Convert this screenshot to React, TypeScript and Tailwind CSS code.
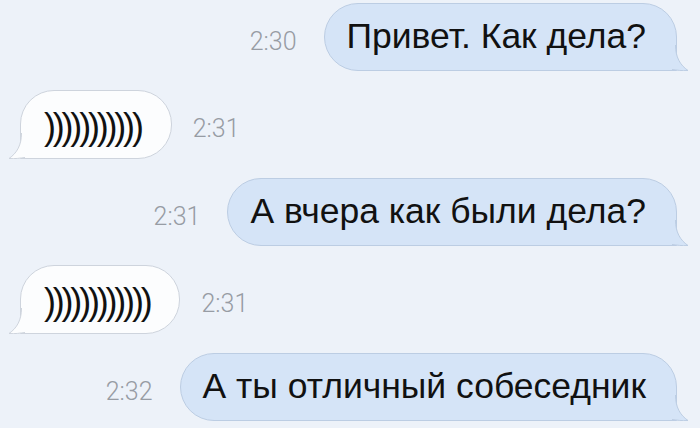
import React from "react";

const Tail = ({ side, fill, stroke }: { side: "left" | "right"; fill: string; stroke: string }) => (
  <svg
    width="18"
    height="26"
    viewBox="0 0 18 26"
    className={
      side === "right"
        ? "absolute right-[-14px] bottom-[-1px]"
        : "absolute left-[-14px] bottom-[-1px] -scale-x-100"
    }
  >
    <path d="M0,0 L3.5,0 C3.5,12 8,20 16,25.5 C10,26 4,25 0,24.5 Z" fill={fill} />
    <path d="M3.5,0 C3.5,12 8,20 16,25.5 C10,26 4,25 0,24.5" fill="none" stroke={stroke} strokeWidth="1" />
  </svg>
);

const Time = ({ t }: { t: string }) => (
  <span
    className="text-[25px] font-light text-[#979ca4] leading-none mt-[8px]"
    style={{ fontFamily: "Roboto, 'Liberation Sans', sans-serif" }}
  >
    {t}
  </span>
);

const Right = ({ text, time }: { text: string; time: string }) => (
  <div className="flex items-center justify-end pr-[23px] gap-[27px]">
    <Time t={time} />
    <div className="relative h-[68px] flex items-center pl-[22px] pr-[30px] bg-[#d5e4f7] border border-[#bccde3] rounded-[34px] rounded-br-none">
      <span className="text-[35.5px] text-[#111] leading-none pb-[1px]">{text}</span>
      <Tail side="right" fill="#d5e4f7" stroke="#bccde3" />
    </div>
  </div>
);

const Left = ({ text, time }: { text: string; time: string }) => (
  <div className="flex items-center justify-start pl-[20px] gap-[21px]">
    <div className="relative h-[69px] flex items-center pl-[23px] pr-[30px] bg-[#fcfdfe] border border-[#ced4dd] rounded-[34px] rounded-bl-none">
      <span className="text-[36px] tracking-[-3.2px] text-[#111] leading-none pt-[4px]">{text}</span>
      <Tail side="left" fill="#fcfdfe" stroke="#ced4dd" />
    </div>
    <Time t={time} />
  </div>
);

export default function App() {
  return (
    <div
      className="w-[700px] h-[428px] bg-[#edf2f9] flex flex-col gap-[19px] pt-[3px] overflow-hidden"
      style={{ fontFamily: "'Liberation Sans', Arial, sans-serif" }}
    >
      <Right text="Привет. Как дела?" time="2:30" />
      <Left text=")))))))))))" time="2:31" />
      <Right text="А вчера как были дела?" time="2:31" />
      <Left text="))))))))))))" time="2:31" />
      <Right text="А ты отличный собеседник" time="2:32" />
    </div>
  );
}
